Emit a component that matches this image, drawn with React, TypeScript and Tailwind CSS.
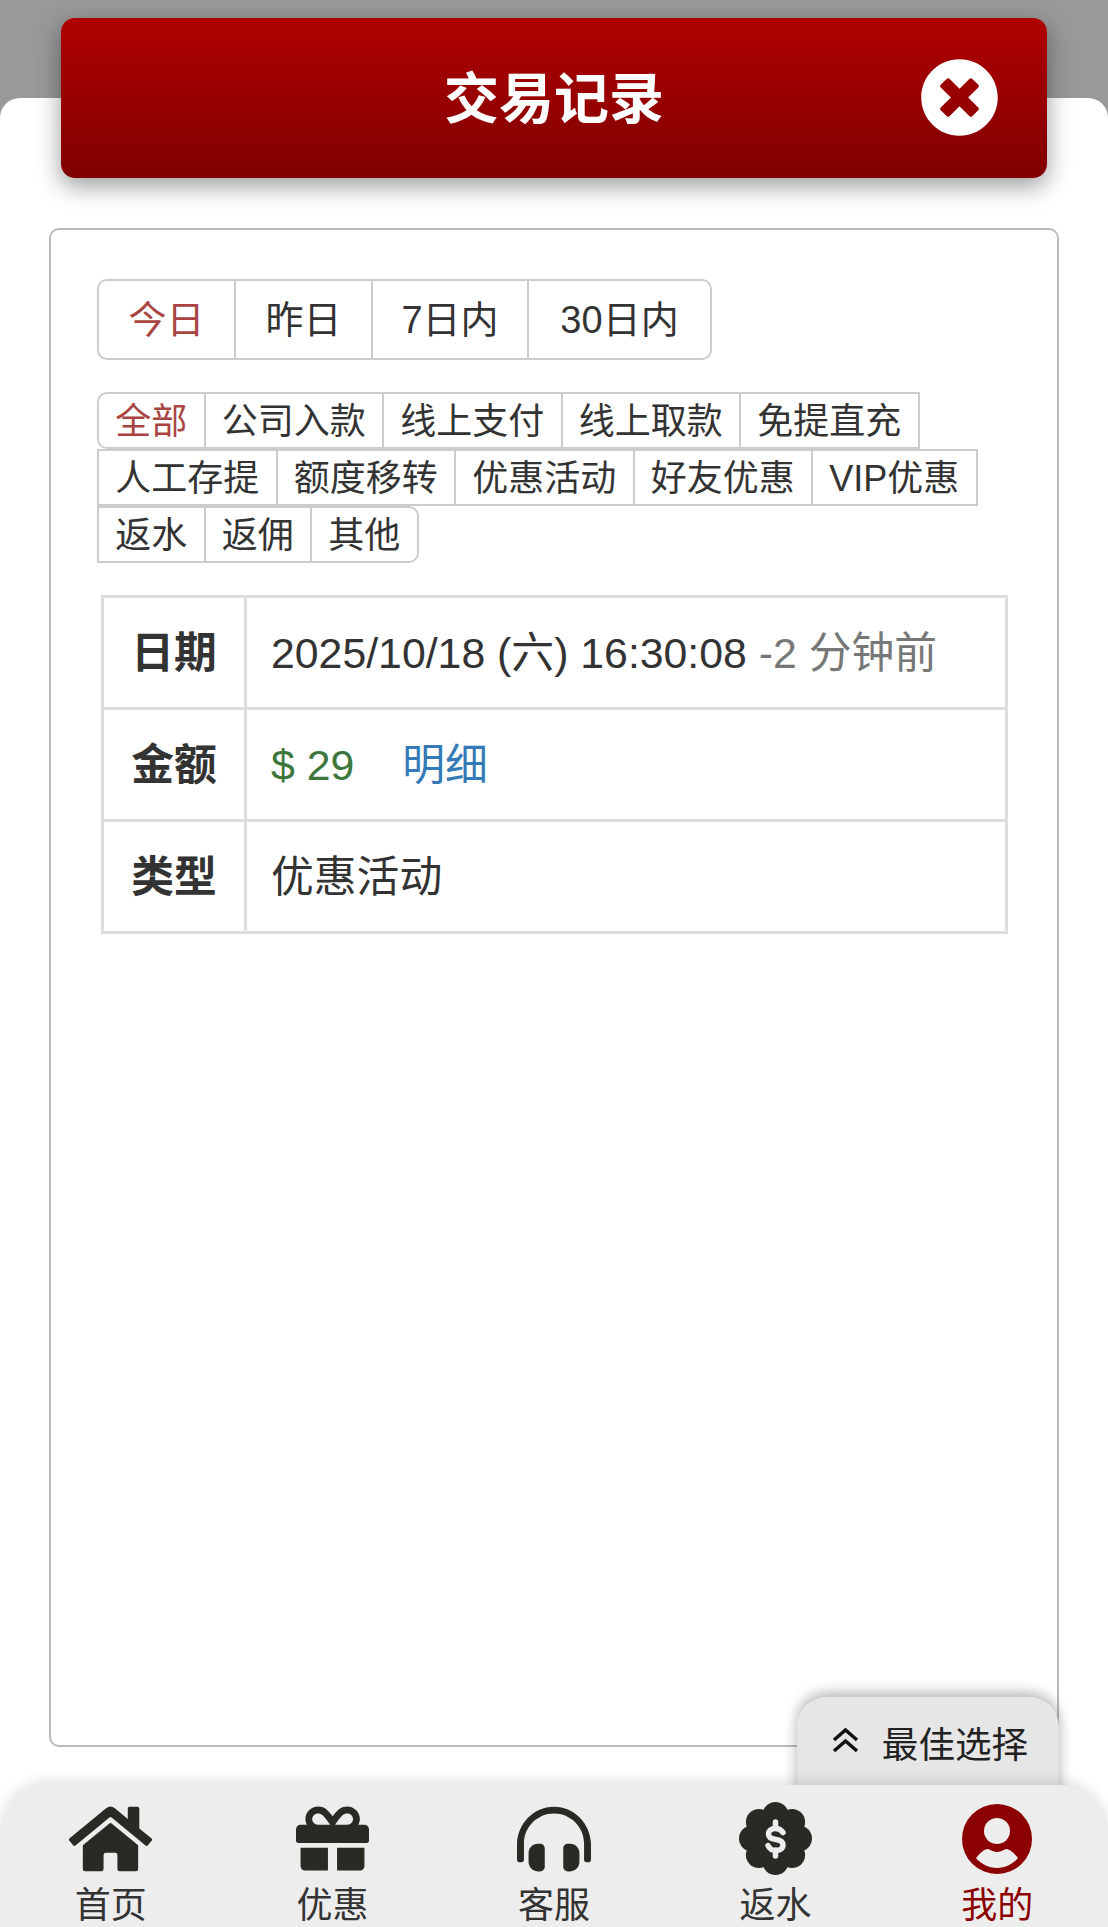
import * as React from 'react';
import { FaGift, FaHeadphonesAlt, FaHome, FaTimesCircle } from 'react-icons/fa';

const FONT = 'font-["Liberation_Sans","Noto_Sans_CJK_SC",sans-serif]';

const RebateIcon = () => (
  <svg viewBox="0 0 73 73" className="w-[73px] h-[73px]">
    <g fill="#2a2a25">
      <circle cx="36.5" cy="36.5" r="27" />
      <circle cx="36.5" cy="13" r="13" />
      <circle cx="36.5" cy="60" r="13" />
      <circle cx="13" cy="36.5" r="13" />
      <circle cx="60" cy="36.5" r="13" />
      <circle cx="19.9" cy="19.9" r="13" />
      <circle cx="53.1" cy="19.9" r="13" />
      <circle cx="19.9" cy="53.1" r="13" />
      <circle cx="53.1" cy="53.1" r="13" />
    </g>
    <path
      d="M44 30.5C42 27.5 39.5 26.5 36.5 26.5C32 26.5 29.5 29 29.5 32C29.5 36 33 37 37 37.5C41 38 44 39.5 44 43C44 46.5 41 48.5 37 48.5C33 48.5 30.5 47 29 43.5M36.5 20V26M36.5 48V54"
      fill="none"
      stroke="#ededed"
      strokeWidth="5.5"
      strokeLinecap="round"
    />
  </svg>
);

const UserIcon = () => (
  <svg viewBox="0 0 70 70" className="w-[70px] h-[70px]">
    <circle cx="35" cy="35" r="35" fill="#8b0000" />
    <circle cx="35" cy="27" r="13" fill="#ededed" />
    <path
      d="M14 54C18 49 22 45 26 45C29 46 32 48 35 48C38 48 41 46 44 45C48 45 52 49 56 54C51 60 43 64 35 64C27 64 19 60 14 54Z"
      fill="#ededed"
    />
  </svg>
);

const tabs = [
  { label: '今日', width: 'w-[135px]' },
  { label: '昨日', width: 'w-[137px]' },
  { label: '7日内', width: 'w-[156px]' },
  { label: '30日内', width: 'w-[183px]' }
];

const filters = [
  '全部',
  '公司入款',
  '线上支付',
  '线上取款',
  '免提直充',
  '人工存提',
  '额度移转',
  '优惠活动',
  '好友优惠',
  'VIP优惠',
  '返水',
  '返佣',
  '其他'
];

const navItems = [
  { label: '首页', icon: <FaHome className="w-[83px] h-[74px] text-[#2a2a25]" /> },
  { label: '优惠', icon: <FaGift className="w-[73px] h-[73px] text-[#2a2a25]" /> },
  { label: '客服', icon: <FaHeadphonesAlt className="w-[74px] h-[74px] text-[#2a2a25]" /> },
  { label: '返水', icon: <RebateIcon /> },
  { label: '我的', icon: <UserIcon />, active: true }
];

export default function App() {
  return (
    <div className={`relative w-[1108px] h-[1927px] overflow-hidden bg-[#999999] text-[#333333] ${FONT}`}>
      <div className="absolute top-[18px] left-[61px] z-10 w-[986px] h-[160px] pt-[2px] flex items-center justify-center rounded-[14px] bg-gradient-to-b from-[#b00000] to-[#800000] shadow-[0_8px_24px_rgba(0,0,0,0.4)]">
        <span className="text-[55px] font-bold text-white">交易记录</span>
        <FaTimesCircle className="absolute right-[48px] top-[40px] w-[79px] h-[79px] text-white" />
      </div>

      <div className="mt-[98px] h-[1829px] px-[49px] pt-[130px] bg-white rounded-t-[20px]">
        <div className="h-[1519px] px-[46px] pt-[49px] border-2 border-[#bbbbbb] rounded-[10px]">
          <div className="flex w-fit h-[81px] border-2 border-[#cccccc] rounded-[10px]">
            {tabs.map((tab, i) => (
              <div
                key={tab.label}
                className={`${tab.width} pt-[2px] flex items-center justify-center text-[38px] ${
                  i > 0 ? 'border-l-2 border-[#cccccc]' : ''
                } ${i === 0 ? 'text-[#a94442]' : ''}`}
              >
                {tab.label}
              </div>
            ))}
          </div>

          <div className="flex flex-wrap w-[910px] mt-[32px] pl-[2px]">
            {filters.map((name, i) => (
              <div
                key={name}
                className={`h-[57px] -ml-[2px] px-[16.25px] pt-[3px] flex items-center border-2 border-[#cccccc] text-[36px] whitespace-nowrap ${
                  i === 0 ? 'rounded-l-[10px] text-[#a94442]' : ''
                } ${i === filters.length - 1 ? 'rounded-r-[10px]' : ''}`}
              >
                {name}
              </div>
            ))}
          </div>

          <table className="w-[907px] mt-[32px] ml-[4px] table-fixed border-collapse text-[42.8px]">
            <tbody>
              <tr className="h-[112px]">
                <th className="w-[143px] pt-[2px] border-[3px] border-[#dddddd] font-bold">日期</th>
                <td className="pl-[24px] pt-[2px] border-[3px] border-[#dddddd] whitespace-nowrap">
                  2025/10/18 (六) 16:30:08 <span className="text-[#777777]">-2 分钟前</span>
                </td>
              </tr>
              <tr className="h-[112px]">
                <th className="pt-[2px] border-[3px] border-[#dddddd] font-bold">金额</th>
                <td className="pl-[24px] pt-[2px] border-[3px] border-[#dddddd]">
                  <span className="text-[#3c763d]">$ 29</span>
                  <span className="ml-[48px] text-[#337ab7]">明细</span>
                </td>
              </tr>
              <tr className="h-[112px]">
                <th className="pt-[2px] border-[3px] border-[#dddddd] font-bold">类型</th>
                <td className="pl-[24px] pt-[2px] border-[3px] border-[#dddddd]">优惠活动</td>
              </tr>
            </tbody>
          </table>
        </div>
      </div>

      <div className="absolute top-[1697px] left-[797px] w-[262px] h-[120px] pt-[24px] pl-[4px] flex justify-center gap-[23px] rounded-t-[30px] bg-[#e6e6e6] shadow-[0_-4px_14px_rgba(0,0,0,0.3)]">
        <svg viewBox="0 0 27 25" className="w-[27px] h-[25px] mt-[7px]">
          <path d="M2 12L13.5 2L25 12M2 23L13.5 13L25 23" fill="none" stroke="#111111" strokeWidth="3.5" />
        </svg>
        <span className="text-[36.6px] leading-[50px] text-[#222222]">最佳选择</span>
      </div>

      <div className="absolute bottom-0 left-0 w-[1108px] h-[142px] pt-[21px] grid grid-cols-5 rounded-t-[50px] bg-[#ededed] shadow-[0_-4px_14px_rgba(0,0,0,0.12)]">
        {navItems.map((item) => (
          <div key={item.label} className="flex flex-col items-center">
            <div className="h-[65px] flex items-center justify-center">{item.icon}</div>
            <span className={`mt-[13px] text-[36px] leading-[43px] ${item.active ? 'text-[#8b0000]' : ''}`}>
              {item.label}
            </span>
          </div>
        ))}
      </div>
    </div>
  );
}
